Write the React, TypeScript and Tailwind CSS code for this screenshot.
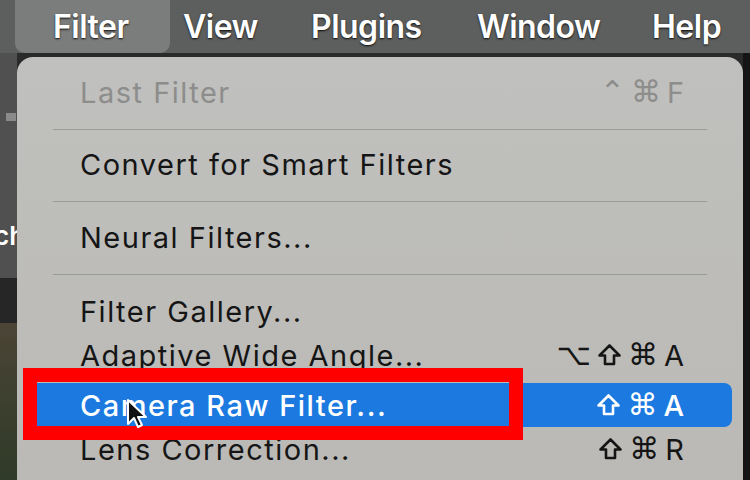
import React from 'react'

const font = { fontFamily: 'Inter, "Noto Sans", sans-serif' }

const ShiftKey = () => (
  <svg width="25" height="24" viewBox="0 0 25 24" className="shrink-0">
    <path
      d="M12.5 2.5 L22.5 12.5 L17 12.5 L17 21 L8 21 L8 12.5 L2.5 12.5 Z"
      fill="none"
      stroke="currentColor"
      strokeWidth="2.6"
      strokeLinejoin="round"
    />
  </svg>
)

const Key = ({ k }: { k: string }) => {
  if (k === '⇧') return <ShiftKey />
  if (k.length === 1 && /[A-Z]/.test(k)) return <span className="text-[29px] leading-none">{k}</span>
  return <span className='font-["DejaVu_Sans",sans-serif] text-[30px] leading-none'>{k}</span>
}

const MenuRow = ({
  label,
  keys,
  disabled = false,
  active = false,
  className = '',
}: {
  label: string
  keys?: string[]
  disabled?: boolean
  active?: boolean
  className?: string
}) => (
  <div
    className={`mx-[11px] h-[44px] rounded-[8px] flex items-center justify-between pl-[52px] pr-[48px] text-[29px] leading-none ${
      active ? 'bg-[#1b79e0] text-white font-medium' : disabled ? 'text-[#8d8d8c]' : 'text-[#151515]'
    } ${className}`}
  >
    <span className="tracking-[1.5px]">{label}</span>
    {keys && (
      <span className="flex items-center gap-[6px]">
        {keys.map((k, i) => (
          <Key key={i} k={k} />
        ))}
      </span>
    )}
  </div>
)

const Sep = () => (
  <div className="h-[30px] flex items-center px-[36px]">
    <div className="h-px w-full bg-[#9b9b99]" />
  </div>
)

export default function App() {
  return (
    <div className="relative w-[750px] h-[480px] overflow-hidden bg-[#2a2a2a]" style={font}>
      {/* menu bar */}
      <div className="h-[53px] bg-[#5d5f5e] flex items-stretch text-white text-[32px] font-semibold tracking-[-0.5px] [text-shadow:0_1px_2px_rgba(0,0,0,0.9)]">
        <div className="ml-[15px] w-[155px] bg-[#7b7d7c] rounded-b-[10px] flex items-center pl-[38px]">Filter</div>
        <div className="flex items-center ml-[13px] w-[128px]">View</div>
        <div className="flex items-center w-[166px]">Plugins</div>
        <div className="flex items-center w-[175px]">Window</div>
        <div className="flex items-center">Help</div>
      </div>

      {/* background behind menu */}
      <div className="flex h-[427px]">
        <div className="w-[17px] flex flex-col">
          <div className="h-[225px] bg-[#4f504f] relative">
            <div className="absolute left-[6px] top-[60px] w-[10px] h-[8px] bg-[#8a8a8a]" />
            <div className="absolute left-0 top-[170px] text-white text-[26px] font-semibold leading-none -translate-x-[6px]">
              ch
            </div>
          </div>
          <div className="h-[45px] bg-[#262626]" />
          <div className="flex-1 bg-gradient-to-b from-[#4b4536] to-[#2f3a28]" />
        </div>
        <div className="flex-1" />
        <div className="w-[7px] bg-[#151515]" />
      </div>

      {/* dropdown menu */}
      <div className="absolute left-[17px] top-[57px] w-[726px] h-[440px] rounded-t-[16px] bg-gradient-to-b from-[#c0c0be] to-[#bab9b5] pt-[13px]">
        <MenuRow label="Last Filter" keys={['⌃', '⌘', 'F']} disabled />
        <Sep />
        <MenuRow label="Convert for Smart Filters" className="-mt-[2px]" />
        <Sep />
        <MenuRow label="Neural Filters..." className="-mt-[1px]" />
        <Sep />
        <MenuRow label="Filter Gallery..." />
        <MenuRow label="Adaptive Wide Angle..." keys={['⌥', '⇧', '⌘', 'A']} />
        <MenuRow label="Camera Raw Filter..." keys={['⇧', '⌘', 'A']} active className="mt-[6px]" />
        <MenuRow label="Lens Correction..." keys={['⇧', '⌘', 'R']} />
      </div>

      {/* annotation box */}
      <div className="absolute left-[23px] top-[368px] w-[500px] h-[72px] border-[14px] border-[#ff0000]" />

      {/* cursor */}
      <svg className="absolute left-[126px] top-[398px]" width="22" height="32" viewBox="0 0 22 32">
        <path d="M2 2 L2 26 L8 20 L12 29 L16 27 L12 19 L20 19 Z" fill="#111" stroke="#fff" strokeWidth="2" strokeLinejoin="round" />
      </svg>
    </div>
  )
}
